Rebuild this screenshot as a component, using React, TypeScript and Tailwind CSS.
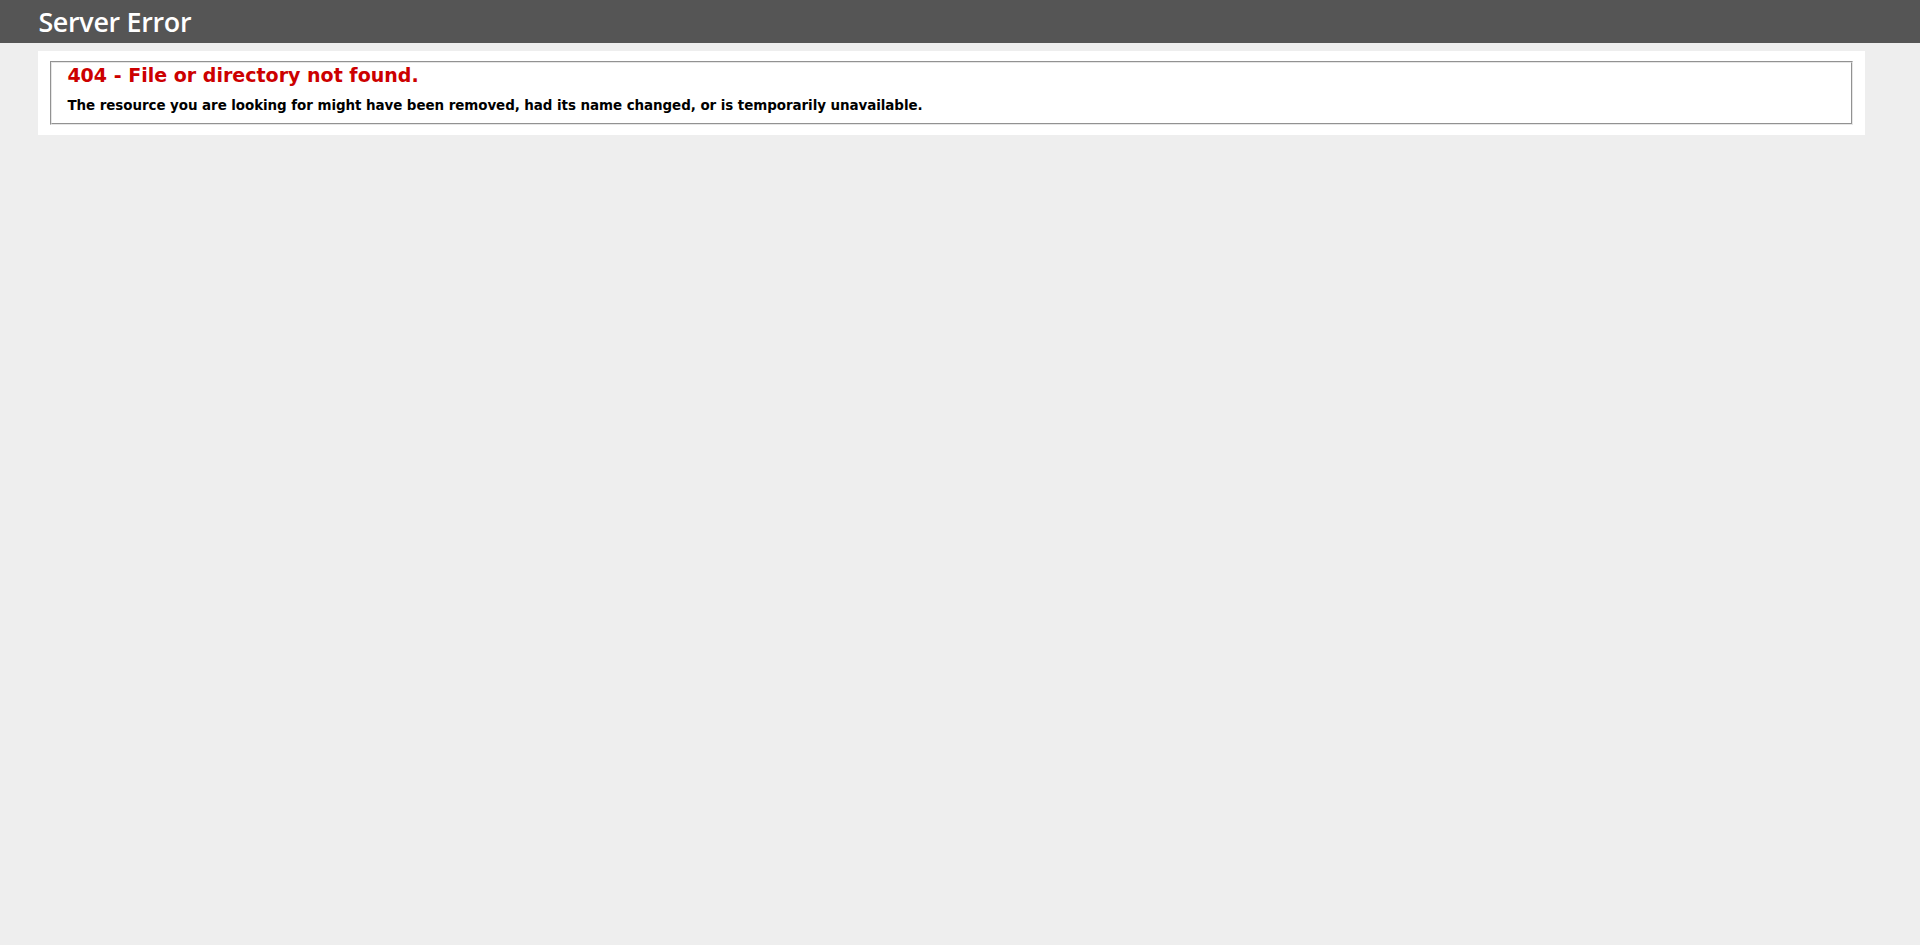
export default function App() {
  return (
    <div className="min-h-[945px] bg-[#eeeeee] text-[11.2px] leading-[1.215] font-['Verdana','DejaVu_Sans',sans-serif]">
      <div className="box-content w-[96%] px-[2%] py-[6px] bg-[#555555] text-white font-['Trebuchet_MS','Open_Sans',sans-serif]">
        <h1 className="m-0 text-[2.4em] font-semibold text-white leading-[1.16] tracking-[-0.3px]">Server Error</h1>
      </div>
      <div className="ml-[2%] relative">
        <div className="bg-white w-[96%] mt-[8px] p-[10px] relative box-content">
          <fieldset className="mx-[2px] px-[15px] pt-0 pb-[10px] border-2 [border-style:groove] border-[#e6e6e6] min-w-0">
            <h2 className="m-0 pt-[1px] leading-[22px] text-[1.7em] font-bold text-[#cc0000]">404 - File or directory not found.</h2>
            <h3 className="mt-[10px] mb-0 pt-[3px] leading-[13.5px] text-[1.2em] font-bold text-black tracking-[-0.06px]">
              The resource you are looking for might have been removed, had its name changed, or is temporarily unavailable.
            </h3>
          </fieldset>
        </div>
      </div>
    </div>
  );
}
